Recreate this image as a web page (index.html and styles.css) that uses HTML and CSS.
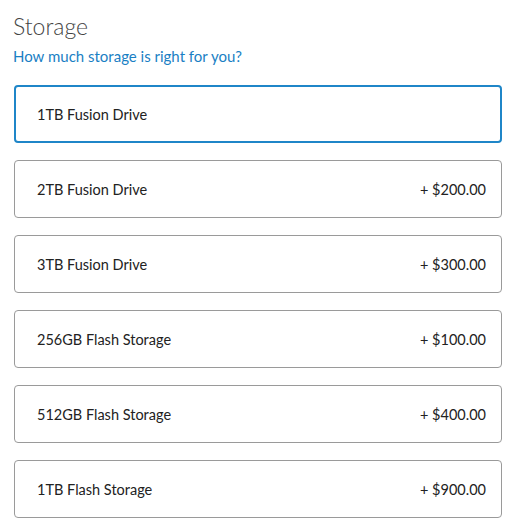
FILE: index.html
```html
<!DOCTYPE html>
<html>
<head>
<meta charset="utf-8">
<link rel="stylesheet" href="styles.css">
</head>
<body>
<div class="page">
  <h2 class="title">Storage</h2>
  <a class="help" href="#">How much storage is right for you?</a>
  <div class="options">
    <div class="option selected"><span class="name">1TB Fusion Drive</span><span class="price"></span></div>
    <div class="option"><span class="name">2TB Fusion Drive</span><span class="price">+ $200.00</span></div>
    <div class="option"><span class="name">3TB Fusion Drive</span><span class="price">+ $300.00</span></div>
    <div class="option"><span class="name">256GB Flash Storage</span><span class="price">+ $100.00</span></div>
    <div class="option"><span class="name">512GB Flash Storage</span><span class="price">+ $400.00</span></div>
    <div class="option"><span class="name">1TB Flash Storage</span><span class="price">+ $900.00</span></div>
  </div>
</div>
</body>
</html>
```
FILE: styles.css
```css
html, body { margin: 0; padding: 0; background: #fff; }
body { font-family: "Lato", "Open Sans", sans-serif; color: #333; }
.page { padding: 12px 14px 0 14px; width: 488px; }
.title { margin: 0 0 0 -1px; font-size: 23px; font-weight: 300; color: #444; line-height: 28px; }
.help { display: block; margin: 6px 0 0 -1px; font-size: 15px; color: #1a80c4; text-decoration: none; line-height: 20px; }
.options { display: flex; flex-direction: column; gap: 17px; margin-top: 19px; }
.option { box-sizing: border-box; height: 58px; border: 1px solid #9a9a9a; border-radius: 4px; display: flex; align-items: center; justify-content: space-between; padding: 0 15px 0 22px; font-size: 14.5px; color: #222; }
.option.selected { border: 2px solid #1f86c8; padding: 0 14px 0 21px; }
```
